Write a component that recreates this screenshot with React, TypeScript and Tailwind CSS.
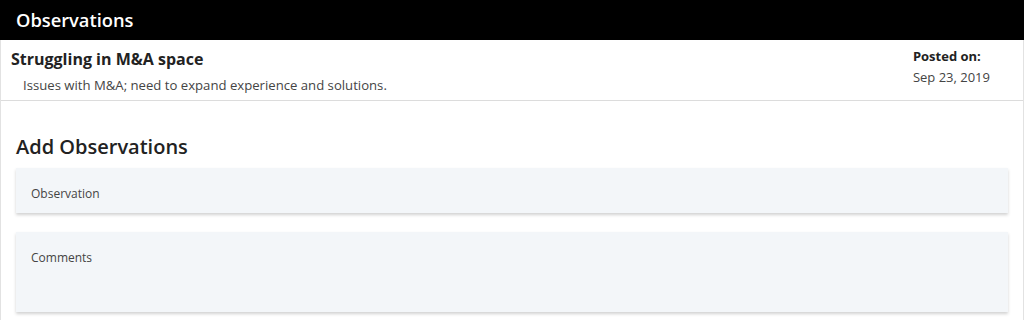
export default function App() {
  return (
    <div className="w-[1024px] h-[320px] overflow-hidden bg-white font-['Open_Sans',sans-serif]">
      <div className="h-[40px] bg-black flex items-center px-[16px]">
        <h1 className="text-[18.3px] font-semibold text-white">Observations</h1>
      </div>
      <div className="border-x border-[#e2e2e2] h-[280px]">
        <div className="flex justify-between border-b border-[#dcdcdc] h-[61px] pl-[10px] pr-[33px]">
          <div className="pt-[8px]">
            <h2 className="text-[16px] leading-[22px] font-bold text-[#222]">Struggling in M&amp;A space</h2>
            <p className="text-[13.15px] leading-[20px] text-[#444] pl-[12px] mt-[5px]">
              Issues with M&amp;A; need to expand experience and solutions.
            </p>
          </div>
          <div className="pt-[6px]">
            <p className="text-[13px] leading-[20px] font-bold text-[#222]">Posted on:</p>
            <p className="text-[13px] leading-[20px] text-[#444] mt-[1px]">Sep 23, 2019</p>
          </div>
        </div>
        <div className="px-[15px] pt-[32px]">
          <h2 className="text-[20px] leading-[28px] font-semibold text-[#222]">Add Observations</h2>
          <div className="mt-[7px] h-[45px] bg-[#f3f6f9] shadow-[0_2px_3px_rgba(0,0,0,0.18)] px-[15px] pt-[12px]">
            <span className="text-[12px] leading-[18px] text-[#444]">Observation</span>
          </div>
          <div className="mt-[19px] h-[80px] bg-[#f3f6f9] shadow-[0_2px_3px_rgba(0,0,0,0.18)] px-[15px] pt-[12px]">
            <span className="text-[12px] leading-[18px] text-[#444]">Comments</span>
          </div>
        </div>
      </div>
    </div>
  );
}
